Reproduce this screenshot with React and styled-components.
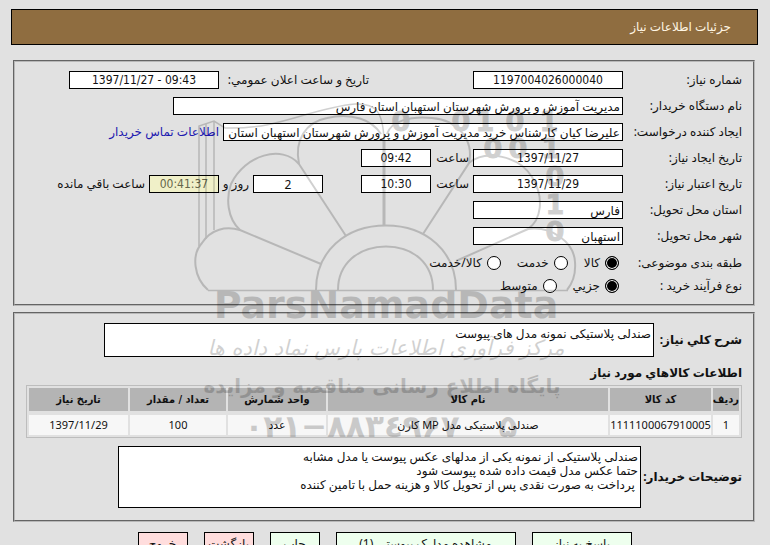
import { useId } from "react"
import styled, { createGlobalStyle } from "styled-components"

export default function App() {
    return (
        <>
            <EstiloGlobal />
            <Pagina dir="rtl" lang="fa">
                <Cabecalho>جزئیات اطلاعات نیاز</Cabecalho>

                <Quadro>
                    <Linhas>
                        <Linha>
                            <Campo rotulo="شماره نیاز:" valor="1197004026000040" centro />
                            <Espaco $largura={96} />
                            <Campo rotulo="تاریخ و ساعت اعلان عمومي:" valor="1397/11/27 - 09:43" larguraRotulo={146} centro />
                        </Linha>
                        <Linha>
                            <Campo rotulo="نام دستگاه خریدار:" valor="مدیریت آموزش و پرورش شهرستان استهبان استان فارس" largura={450} />
                        </Linha>
                        <Linha>
                            <Campo rotulo="ایجاد کننده درخواست:" valor="علیرضا کیان کارشناس خرید مدیریت آموزش و پرورش شهرستان استهبان استان فارس" largura={400} />
                            <Contato href="#contato">اطلاعات تماس خریدار</Contato>
                        </Linha>
                        <Linha>
                            <Campo rotulo="تاریخ ایجاد نیاز:" valor="1397/11/27" centro />
                            <Campo rotulo="ساعت" valor="09:42" larguraRotulo={34} largura={70} centro />
                        </Linha>
                        <Linha>
                            <Campo rotulo="تاریخ اعتبار نیاز:" valor="1397/11/29" centro />
                            <Campo rotulo="ساعت" valor="10:30" larguraRotulo={34} largura={70} centro />
                            <Espaco $largura={30} />
                            <Entrada aria-label="روز" readOnly value="2" $largura={70} $centro />
                            <Campo rotulo="روز و" valor="00:41:37" larguraRotulo={26} largura={70} centro destaque />
                            <span>ساعت باقي مانده</span>
                        </Linha>
                        <Linha>
                            <Campo rotulo="استان محل تحویل:" valor="فارس" />
                        </Linha>
                        <Linha>
                            <Campo rotulo="شهر محل تحویل:" valor="استهبان" />
                        </Linha>
                    </Linhas>

                    <Opcoes rotulo="طبقه بندی موضوعی:" nome="classe" itens={["کالا", "خدمت", "کالا/خدمت"]} />
                    <Opcoes rotulo="نوع فرآیند خرید :" nome="processo" itens={["جزیي", "متوسط"]} />
                </Quadro>

                <Quadro $segundo>
                    <Descricao>
                        <TituloArea htmlFor="descricao" $largura={84}>شرح کلي نياز:</TituloArea>
                        <Area id="descricao" readOnly $largura={550} $altura={34} defaultValue="صندلی پلاستیکی نمونه مدل های پیوست" />
                    </Descricao>
                    <TituloTabela>اطلاعات کالاهاي مورد نياز</TituloTabela>
                    <Tabela>
                        <colgroup>
                            <Coluna $largura={26} />
                            <Coluna $largura={101} />
                            <col />
                            <Coluna $largura={98} />
                            <Coluna $largura={96} />
                            <Coluna $largura={99} />
                        </colgroup>
                        <thead>
                            <tr>{colunas.map((c) => <th key={c}>{c}</th>)}</tr>
                        </thead>
                        <tbody>
                            {produtos.map((p) => <tr key={p[0]}>{p.map((v) => <td key={v}>{v}</td>)}</tr>)}
                        </tbody>
                    </Tabela>
                    <Descricao $espaco>
                        <TituloArea htmlFor="observacoes" $largura={97}>توضیحات خریدار:</TituloArea>
                        <Area id="observacoes" readOnly $largura={523} $altura={62} defaultValue={observacoes} />
                    </Descricao>
                </Quadro>

                <Botoes>
                    <Botao $largura={100}>پاسخ به نیاز</Botao>
                    <Botao $largura={180}>مشاهده مدارک پیوستی (1)</Botao>
                    <Botao $largura={50}>چاپ</Botao>
                    <Botao $largura={50} $sair>بازگشت</Botao>
                    <Botao $largura={50} $sair>خروج</Botao>
                </Botoes>

                <MarcaDagua />
            </Pagina>
        </>
    )
}

const colunas = ["ردیف", "کد کالا", "نام کالا", "واحد شمارش", "تعداد / مقدار", "تاریخ نیاز"]
const produtos = [
    ["1", "1111100067910005", "صندلی پلاستیکی مدل MP کارن", "عدد", "100", "1397/11/29"]
]
const observacoes = `صندلی پلاستیکی از نمونه یکی از مدلهای عکس پیوست یا مدل مشابه
حتما عکس مدل قیمت داده شده پیوست شود
 پرداخت به صورت نقدی پس از تحویل کالا و هزینه حمل با تامین کننده`

function Campo({ rotulo, valor, largura = 150, larguraRotulo = 115, centro, destaque }) {
    const id = useId()
    return (
        <>
            <Rotulo htmlFor={id} $largura={larguraRotulo}>{rotulo}</Rotulo>
            <Entrada
                id={id}
                dir={centro ? "ltr" : "rtl"}
                readOnly
                value={valor}
                $largura={largura}
                $centro={centro}
                $destaque={destaque}
            />
        </>
    )
}

function Opcoes({ rotulo, nome, itens }) {
    return (
        <GrupoOpcoes role="radiogroup" aria-label={rotulo}>
            <Rotulo as="span" $largura={119}>{rotulo}</Rotulo>
            {itens.map((item, i) => (
                <Opcao key={item}>
                    <input type="radio" name={nome} defaultChecked={i === 0} />
                    {item}
                </Opcao>
            ))}
        </GrupoOpcoes>
    )
}

function MarcaDagua() {
    return (
        <Marca viewBox="190 90 390 350" aria-hidden="true">
            <g fill="none" stroke="#000" strokeWidth="2">
                <path d="M208 290.500H568" strokeWidth="1.500" />
                <path d="M316 290C316 252 345 225.500 386 225.500S456 252 456 290" />
                <path d="M338 290C338 264 358 246.500 386 246.500S433 264 433 290" />
                <path d="M208 290C194 278 191 255 202 243C211 229 226 226 240 230L321 264" />
                <path d="M240 230C227 218 226 198 231 184C245 155 282 144 299 164L346 236" />
                <path d="M299 164C294 140 306 122 327 118C352 112 372 120 381 134" />
                <path d="M384 140V225" strokeWidth="3" />
                <path d="M387 134C391 121 410 116 432 118C458 120 474 140 469 163L423 234" />
                <path d="M469 163C486 149 519 156 532 177C545 198 541 220 528 229L456 261" />
                <path d="M528 229C553 226 574 243 575 262C576 275 572 284 567 290" />
            </g>
            <g fill="none" stroke="#000" strokeWidth="1.500">
                <path d="M199 246V126L214 121L225 128C280 130 310 108 355 104C376 103 383 112 384 140M206 239V124M214 230V121" />
            </g>
            <g fontFamily="DejaVu Sans" fontWeight="700" fontSize="27" stroke="#000" textAnchor="middle">
                <text x="401" y="131">0</text>
                <text x="461" y="131">0</text>
                <text x="485" y="131">1</text>
                <text x="515" y="131">0</text>
                <text x="549" y="131">1</text>
                <text x="493" y="158">0</text>
                <text x="518" y="158">0</text>
                <text x="551" y="158">1</text>
                <text x="555" y="186">0</text>
                <text x="555" y="214">1</text>
                <text x="555" y="241">0</text>
            </g>
            <g textAnchor="middle" fontFamily="DejaVu Sans">
                <text x="386" y="318" fontWeight="700" fontSize="38">ParsNamadData</text>
                <text x="386" y="355" fontStyle="italic" fontSize="21" direction="rtl">مرکز فرآوری اطلاعات پارس نماد داده ها</text>
                <text x="382" y="393" fontWeight="700" fontSize="20" direction="rtl">پایگاه اطلاع رسانی مناقصه و مزایده</text>
                <text x="352" y="437" fontWeight="700" fontSize="31">۰۲۱−۸۸۳٤۹۶۷</text>
                <text x="508" y="437" fontWeight="700" fontSize="31">۵</text>
            </g>
        </Marca>
    )
}

const EstiloGlobal = createGlobalStyle`
    * {
        box-sizing: border-box;
    }
    body {
        margin: 0;
        background-color: #E1E1E1;
    }
    body, input, textarea, button {
        font-family: "Noto Sans", "DejaVu Sans", sans-serif;
        font-size: 12px;
        line-height: 14px;
        color: #111111;
    }
`
const Pagina = styled.main`
    position: relative;
    padding: 9px 12px 10px 11px;
`
const Cabecalho = styled.header`
    height: 36px;
    padding: 0 26px;
    border: 1px solid #000000;
    background-color: #8F6D40;
    color: #FFF6E4;

    display: flex;
    align-items: center;
`
const Quadro = styled.fieldset`
    min-width: 0;
    margin: ${p => p.$segundo ? 6 : 15}px 3px 0 2px;
    padding: ${p => p.$segundo ? "9px 11px 12px" : "9px 11px"};
    border: 2px groove #B8B8B8;
`
const Linhas = styled.div`
    display: flex;
    flex-direction: column;
    gap: 8px;
    margin-bottom: 9px;
`
const Linha = styled.div`
    height: 18px;
    display: flex;
    align-items: center;
    gap: 4px;
    white-space: nowrap;
`
const Rotulo = styled.label`
    flex: none;
    width: ${p => p.$largura}px;
    white-space: nowrap;
`
const Espaco = styled.span`
    width: ${p => p.$largura}px;
`
const Entrada = styled.input`
    width: ${p => p.$largura}px;
    height: 18px;
    padding: 0 2px;
    border: 1px solid #000000;
    border-radius: 0;
    background-color: ${p => p.$destaque ? "#F0F0C8" : "#FFFFFF"};
    color: ${p => p.$destaque ? "#66664A" : "#111111"};
    text-align: ${p => p.$centro ? "center" : "right"};
    outline: none;

    &[dir="ltr"] {
        font-family: "DejaVu Sans Condensed", "DejaVu Sans", sans-serif;
    }
`
const Contato = styled.a`
    color: #2018B0;
    text-decoration: none;
`
const GrupoOpcoes = styled.div`
    height: 18px;
    display: flex;
    align-items: center;

    & + & {
        margin-top: 5px;
    }
`
const Opcao = styled.label`
    display: flex;
    align-items: center;
    gap: 5px;
    margin: 0 4px 0 12px;

    input {
        appearance: none;
        width: 14px;
        height: 14px;
        margin: 0;
        border: 1px solid #000000;
        border-radius: 50%;
        background-color: #FFFFFF;
    }
    input:checked {
        background-color: #000000;
        box-shadow: inset 0 0 0 1px #FFFFFF;
    }
`
const Descricao = styled.div`
    display: flex;
    align-items: center;
    gap: 4px;
    margin-top: ${p => p.$espaco ? 8 : 0}px;
`
const TituloArea = styled.label`
    flex: none;
    width: ${p => p.$largura}px;
    font-weight: 700;
    white-space: nowrap;
`
const TituloTabela = styled.h2`
    margin: 7px 0 3px;
    font-size: 12px;
    font-weight: 700;
    line-height: 18px;
`
const Area = styled.textarea`
    width: ${p => p.$largura}px;
    height: ${p => p.$altura}px;
    padding: 3px 2px;
    border: 1px solid #000000;
    border-radius: 0;
    background-color: #FFFFFF;
    resize: none;
    outline: none;
    overflow: hidden;
`
const Tabela = styled.table`
    width: 100%;
    table-layout: fixed;
    border: 1px solid #BDBDBD;
    border-spacing: 2px;
    font-size: 11px;
    text-align: center;

    th {
        height: 23px;
        padding: 0;
        background-color: #B4B4B4;
        font-family: "DejaVu Sans Condensed", "DejaVu Sans", sans-serif;
    }
    td {
        height: 22px;
        padding: 0;
        border-top: 2px solid #E1E1E1;
        background-color: #F7F7F7;
    }
`
const Coluna = styled.col`
    width: ${p => p.$largura}px;
`
const Botoes = styled.div`
    display: flex;
    justify-content: center;
    gap: 16px;
    margin-top: 10px;
`
const Botao = styled.button`
    width: ${p => p.$largura}px;
    height: 24px;
    padding: 0;
    border: 1px solid #000000;
    border-radius: 0;
    background-color: ${p => p.$sair ? "#FFDDDD" : "#EEFFEE"};
    white-space: nowrap;
`
/* fica por cima de tudo, como um carimbo */
const Marca = styled.svg`
    position: absolute;
    top: 90px;
    left: calc(50% - 195px);
    width: 390px;
    height: 350px;
    opacity: 0.18;
    pointer-events: none;
`
